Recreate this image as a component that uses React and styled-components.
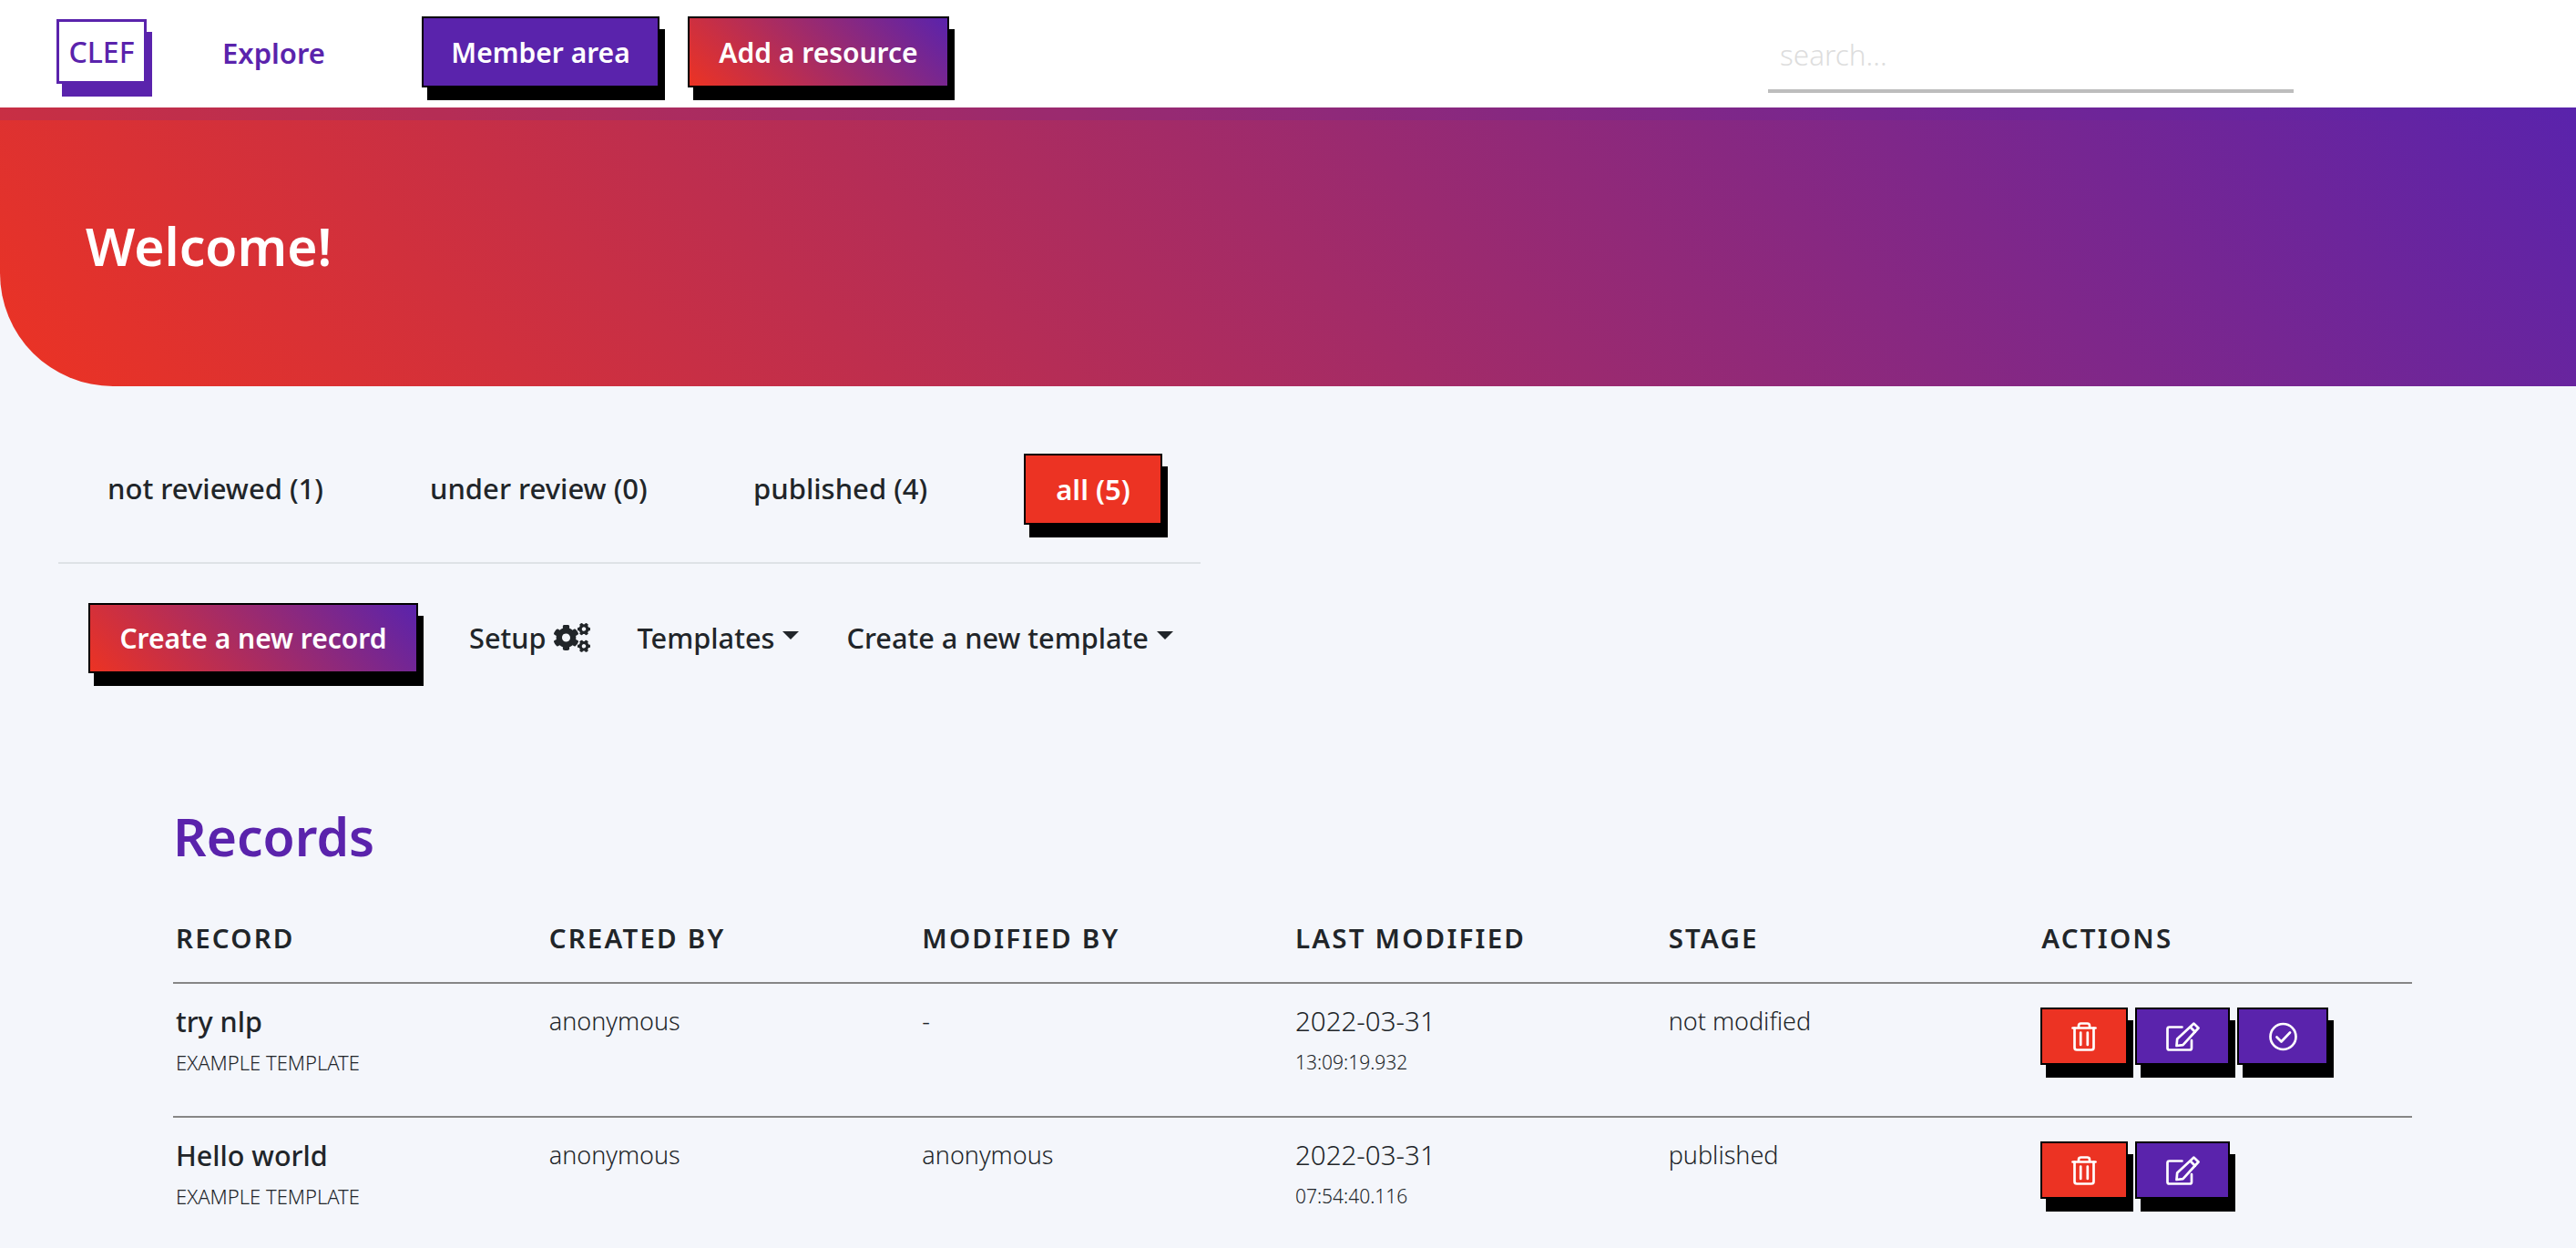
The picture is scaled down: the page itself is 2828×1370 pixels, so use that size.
import React from 'react'
import styled, { createGlobalStyle, css } from 'styled-components'
import { FaCogs } from 'react-icons/fa'

const purple = '#5a23ac'
const red = '#ec3323'
const ink = '#212529'
const brandGradient = `linear-gradient(45deg, #ec3323 0%, #5a23ac 100%)`

const GlobalStyle = createGlobalStyle`
  html, body {
    margin: 0;
    height: 100%;
    overflow: hidden;
  }
  body {
    background: #f4f6fb;
    color: ${ink};
    font-family: "Noto Sans", "Liberation Sans", sans-serif;
  }
  * {
    box-sizing: border-box;
  }
`

const Nav = styled.nav`
  height: 118px;
  background: #fff;
  display: flex;
  align-items: flex-start;
`

const Logo = styled.a`
  margin: 21px 0 0 62px;
  width: 99px;
  height: 71px;
  background: #fff;
  border: 3px solid ${purple};
  box-shadow: 6px 14px 0 ${purple};
  color: ${purple};
  font-size: 32px;
  font-weight: 500;
  display: flex;
  align-items: center;
  justify-content: center;
`

const NavLink = styled.a`
  margin: 36px 0 0 83px;
  width: 219px;
  font-size: 31px;
  font-weight: 600;
  line-height: 44px;
  color: ${purple};
`

const ShadowButton = styled.button`
  font-family: inherit;
  font-size: 30px;
  font-weight: 600;
  color: #fff;
  border: 2px solid #000;
  border-radius: 0;
  box-shadow: 6px 14px 0 #000;
  padding: 0;
  display: flex;
  align-items: center;
  justify-content: center;
  background: ${props => props.$tone === 'gradient' ? brandGradient : props.$tone === 'red' ? red : purple};
  width: ${props => props.$w}px;
  height: ${props => props.$h}px;
`

const NavButtons = styled.div`
  margin-top: 18px;
  display: flex;
  gap: 31px;
`

const SearchBox = styled.input`
  margin: 26px 0 0 899px;
  width: 577px;
  height: 76px;
  border: 0;
  border-bottom: 4px solid #bdbdbd;
  outline: none;
  padding: 0 13px 6px;
  font-family: inherit;
  font-size: 31.5px;
  font-weight: 300;
  background: transparent;
  &::placeholder {
    color: #ddd;
    opacity: 1;
  }
`

const Banner = styled.header`
  height: 306px;
  background: ${brandGradient};
  border-bottom-left-radius: 124px;
  box-shadow: inset 0 14px 0 rgba(90, 35, 172, 0.16);
  padding: 116px 0 0 94px;
`

const BannerTitle = styled.h1`
  margin: 0;
  color: #fff;
  font-size: 57px;
  line-height: 72px;
  font-weight: 600;
`

const Tabs = styled.div`
  margin: 74px 0 0 64px;
  width: 1254px;
  height: 121px;
  border-bottom: 2px solid #dee2e6;
  display: flex;
  align-items: flex-start;
`

const Tab = styled.a`
  font-size: 31px;
  font-weight: 500;
  height: 76px;
  line-height: 76px;
  width: ${props => props.$w}px;
  margin-left: ${props => props.$ml}px;
`

const AllButton = styled(ShadowButton)`
  font-size: 31px;
`

const Toolbar = styled.div`
  margin: 43px 0 0 97px;
  display: flex;
  align-items: flex-start;
`

const ToolItem = styled.a`
  font-size: 30.7px;
  font-weight: 500;
  height: 76px;
  line-height: 76px;
  display: flex;
  align-items: center;
  margin-left: ${props => props.$ml}px;
  > svg {
    margin-left: 8px;
  }
`

const Caret = styled.span`
  width: 0;
  height: 0;
  margin-left: 9px;
  margin-top: -6px;
  border-top: 9px solid ${ink};
  border-left: 9px solid transparent;
  border-right: 9px solid transparent;
`

const Section = styled.section`
  margin: 141px 0 0 190px;
  width: 2458px;
`

const SectionTitle = styled.h2`
  margin: 0;
  color: ${purple};
  font-size: 57px;
  line-height: 76px;
  font-weight: 600;
`

const cols = css`
  display: grid;
  grid-template-columns: repeat(6, 1fr);
`

const HeadRow = styled.div`
  ${cols}
  margin-top: 54px;
  height: 70px;
  border-bottom: 2px solid #868686;
`

const HeadCell = styled.div`
  padding-left: 3px;
  font-size: 29.5px;
  font-weight: 600;
  letter-spacing: 2.2px;
  text-transform: uppercase;
  line-height: 40px;
`

const Row = styled.div`
  ${cols}
  height: 147px;
  padding-top: 21px;
  border-bottom: 2px solid #868686;
`

const Cell = styled.div`
  padding-left: 3px;
  font-size: 27px;
  font-weight: 300;
  line-height: 40px;
`

const RecordName = styled.div`
  font-size: 30.5px;
  font-weight: 500;
  line-height: 40px;
`

const DateText = styled.div`
  font-size: 29.5px;
  line-height: 40px;
`

const Small = styled.div`
  margin-top: 8px;
  font-size: ${props => props.$size}px;
  font-weight: 300;
  line-height: 34px;
`

const Actions = styled.div`
  display: flex;
  align-items: flex-start;
  gap: 8px;
  margin: 5px 0 0 2px;
`

const IconSvg = styled.svg`
  width: ${props => props.$w}px;
  height: 32px;
  fill: none;
  stroke: #fff;
  stroke-width: 2.7;
  stroke-linecap: round;
  stroke-linejoin: round;
`

const TrashIcon = () => (
  <IconSvg $w={28} viewBox="0 0 28 32">
    <path d="M1.5 6.5H26.5" />
    <path d="M8 6 V4 A2.5 2.5 0 0 1 10.5 1.5 H17.5 A2.5 2.5 0 0 1 20 4 V6" />
    <path d="M3.5 6.5 V28 A2.5 2.5 0 0 0 6 30.5 H22 A2.5 2.5 0 0 0 24.5 28 V6.5" />
    <path d="M10.2 11.5 V25 M17.8 11.5 V25" />
  </IconSvg>
)

const EditIcon = () => (
  <IconSvg $w={37} viewBox="0 0 37 32">
    <path d="M17.5 5.5 H3.5 A2 2 0 0 0 1.5 7.5 V28.5 A2 2 0 0 0 3.5 30.5 H26 A2 2 0 0 0 28 28.5 V20" />
    <path d="M30.5 1.6 L35.5 6.5 L18.5 25.2 L11.5 26 L12.2 18.5 Z" />
    <path d="M26.8 5.8 L31.8 10.8" />
  </IconSvg>
)

const CheckIcon = () => (
  <IconSvg $w={31} viewBox="0 0 31 32">
    <circle cx="15.5" cy="16" r="14" />
    <path d="M8.5 16.5 L13.5 21.5 L23 11.5" />
  </IconSvg>
)

const records = [
  { name: 'try nlp', by: 'anonymous', mod: '-', date: '2022-03-31', time: '13:09:19.932', stage: 'not modified', review: true },
  { name: 'Hello world', by: 'anonymous', mod: 'anonymous', date: '2022-03-31', time: '07:54:40.116', stage: 'published', review: false },
]

const App = () => (
  <>
    <GlobalStyle />
    <Nav>
      <Logo>CLEF</Logo>
      <NavLink>Explore</NavLink>
      <NavButtons>
        <ShadowButton $w={261} $h={78}>Member area</ShadowButton>
        <ShadowButton $tone="gradient" $w={287} $h={78}>Add a resource</ShadowButton>
      </NavButtons>
      <SearchBox placeholder="search..." />
    </Nav>
    <Banner>
      <BannerTitle>Welcome!</BannerTitle>
    </Banner>
    <Tabs>
      <Tab $ml={54} $w={354}>not reviewed (1)</Tab>
      <Tab $w={355}>under review (0)</Tab>
      <Tab $w={297}>published (4)</Tab>
      <AllButton $tone="red" $w={152} $h={78}>all (5)</AllButton>
    </Tabs>
    <Toolbar>
      <ShadowButton $tone="gradient" $w={362} $h={77}>Create a new record</ShadowButton>
      <ToolItem $ml={56}>Setup<FaCogs size={40} /></ToolItem>
      <ToolItem $ml={52}>Templates<Caret /></ToolItem>
      <ToolItem $ml={52}>Create a new template<Caret /></ToolItem>
    </Toolbar>
    <Section>
      <SectionTitle>Records</SectionTitle>
      <HeadRow>
        <HeadCell>Record</HeadCell>
        <HeadCell>Created by</HeadCell>
        <HeadCell>Modified by</HeadCell>
        <HeadCell>Last modified</HeadCell>
        <HeadCell>Stage</HeadCell>
        <HeadCell>Actions</HeadCell>
      </HeadRow>
      {records.map(r => (
        <Row key={r.name}>
          <Cell>
            <RecordName>{r.name}</RecordName>
            <Small $size={22}>EXAMPLE TEMPLATE</Small>
          </Cell>
          <Cell>{r.by}</Cell>
          <Cell>{r.mod}</Cell>
          <Cell>
            <DateText>{r.date}</DateText>
            <Small $size={21}>{r.time}</Small>
          </Cell>
          <Cell>{r.stage}</Cell>
          <Actions>
            <ShadowButton $tone="red" $w={96} $h={63}><TrashIcon /></ShadowButton>
            <ShadowButton $w={104} $h={63}><EditIcon /></ShadowButton>
            {r.review && <ShadowButton $w={100} $h={63}><CheckIcon /></ShadowButton>}
          </Actions>
        </Row>
      ))}
    </Section>
  </>
)

export default App
